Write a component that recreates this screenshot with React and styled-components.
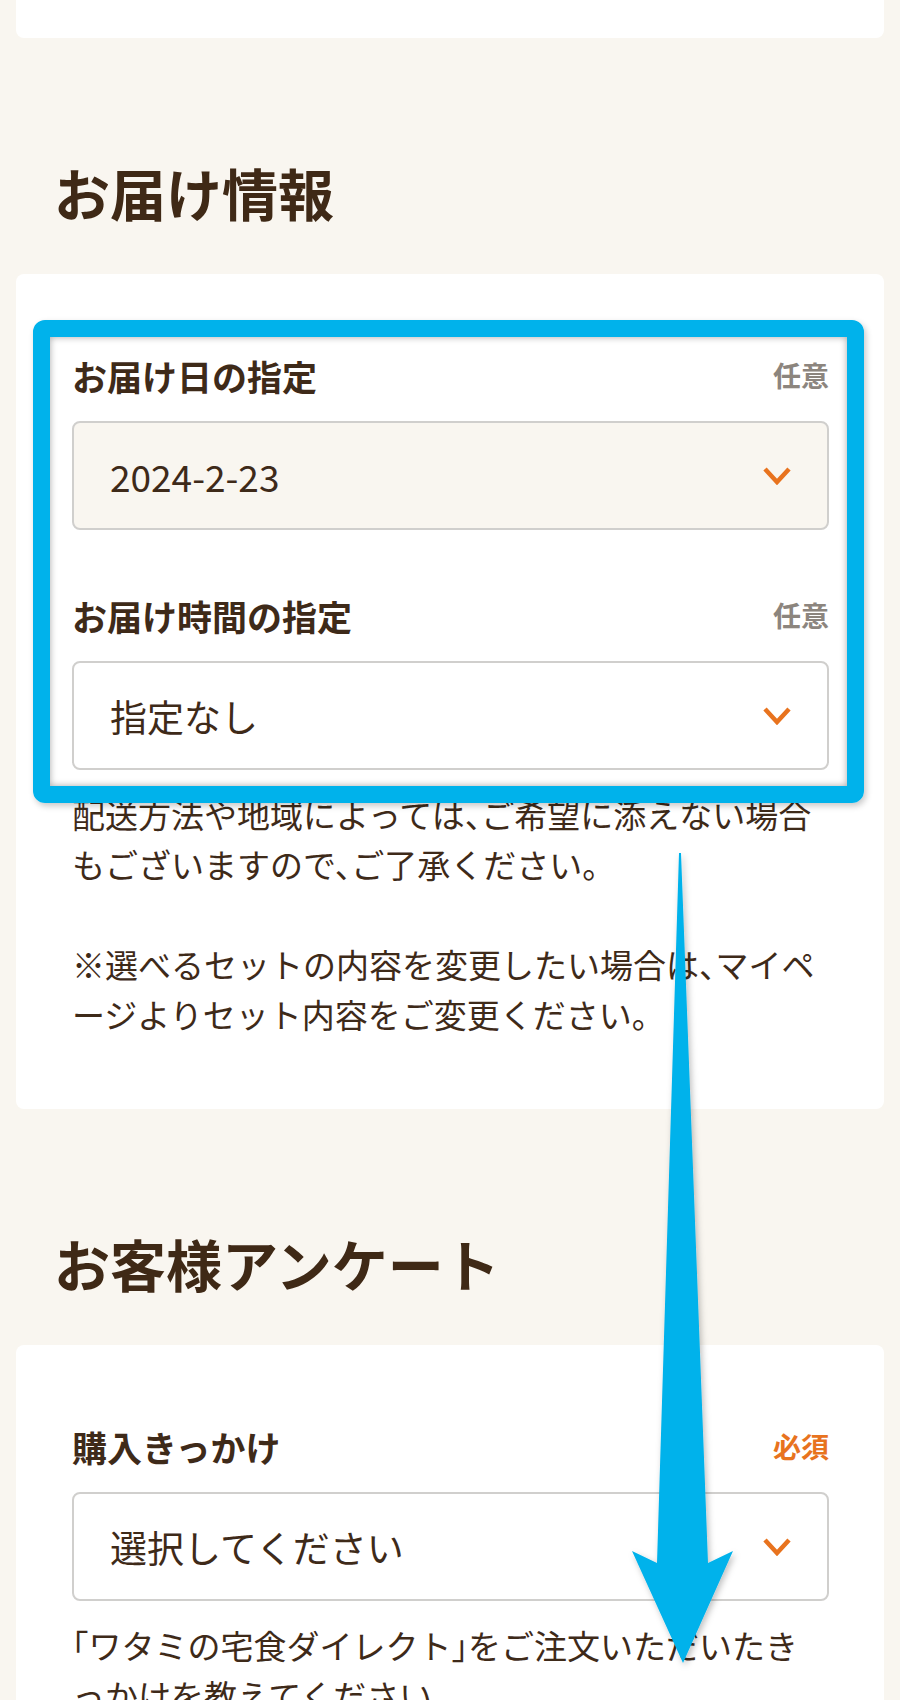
import React from 'react'
import styled, { createGlobalStyle } from 'styled-components'

const GlobalStyle = createGlobalStyle`
  html, body {
    margin: 0;
    padding: 0;
    background: #f9f6f0;
  }
  body {
    font-family: "Noto Sans CJK JP", "Noto Sans", sans-serif;
    color: #3e2a19;
  }
`;

const Page = styled.main`
  position: relative;
  padding: 0 16px 200px;
  min-height: 1700px;
  box-sizing: border-box;
`;

const Card = styled.section`
  background: #fff;
  border-radius: ${({ $clipped }) => ($clipped ? '0 0 8px 8px' : '8px')};
  padding: ${({ $clipped }) => ($clipped ? '0' : '76px 55px 70px 56px')};
  height: ${({ $clipped }) => ($clipped ? '38px' : 'auto')};
`;

const SectionTitle = styled.h2`
  margin: 113px 0 42px;
  padding-left: 38px;
  font-size: 56px;
  line-height: 81px;
  font-weight: 700;
  color: #3f2916;
`;

const FieldGroup = styled.div`
  position: relative;
`;

const Field = styled.div`
  & + & {
    margin-top: 60px;
  }
`;

const LabelRow = styled.div`
  display: flex;
  align-items: center;
  justify-content: space-between;
  height: 50px;
  margin-bottom: 21px;
`;

const Label = styled.span`
  font-size: 35px;
  font-weight: 700;
  color: #3e2a19;
`;

const Badge = styled.span`
  font-size: 28px;
  font-weight: 700;
  color: ${({ $required }) => ($required ? '#e8731e' : '#8c857e')};
`;

const Select = styled.div`
  display: flex;
  align-items: center;
  justify-content: space-between;
  height: 109px;
  box-sizing: border-box;
  padding: 0 36px 0 36px;
  border: 2px solid #d0cfcd;
  border-radius: 8px;
  background: ${({ $filled }) => ($filled ? '#f9f6f0' : '#fff')};
  font-size: 37px;
  color: #3e2a19;
`;

const Note = styled.p`
  margin: 19px 0 0;
  font-size: 33px;
  line-height: 50px;
  line-break: loose;
  font-feature-settings: "halt";
  color: #3e2a19;

  & + & {
    margin-top: 50px;
  }
`;

const Highlight = styled.div`
  position: absolute;
  top: -30px;
  bottom: -33px;
  left: -39px;
  right: -35px;
  border: 17px solid #00b2eb;
  border-radius: 12px;
  box-shadow: 2px 3px 6px rgba(0, 0, 0, 0.22), inset 0 0 7px rgba(0, 0, 0, 0.35);
  pointer-events: none;
`;

const ArrowLayer = styled.svg`
  position: absolute;
  top: 0;
  left: 0;
  pointer-events: none;
`;

const Chevron = () => (
  <svg width="28" height="18" viewBox="0 0 28 18">
    <path d="M2 2 L14 15 L26 2" fill="none" stroke="#e8731e" strokeWidth="4.5" />
  </svg>
)

const SelectField = ({ label, badge, required, value, filled }) => (
  <Field>
    <LabelRow>
      <Label>{label}</Label>
      <Badge $required={required}>{badge}</Badge>
    </LabelRow>
    <Select $filled={filled}>
      <span>{value}</span>
      <Chevron />
    </Select>
  </Field>
)

export default function App() {
  return (
    <>
      <GlobalStyle />
      <Page>
        <Card $clipped />

        <SectionTitle>お届け情報</SectionTitle>
        <Card>
          <FieldGroup>
            <SelectField label="お届け日の指定" badge="任意" value="2024-2-23" filled />
            <SelectField label="お届け時間の指定" badge="任意" value="指定なし" />
            <Highlight />
          </FieldGroup>
          <Note>配送方法や地域によっては、ご希望に添えない場合もございますので、ご了承ください。</Note>
          <Note>※選べるセットの内容を変更したい場合は、マイページよりセット内容をご変更ください。</Note>
        </Card>

        <SectionTitle>お客様アンケート</SectionTitle>
        <Card>
          <SelectField label="購入きっかけ" badge="必須" required value="選択してください" />
          <Note>「ワタミの宅食ダイレクト」をご注文いただいたきっかけを教えてください。</Note>
        </Card>

        <ArrowLayer width="900" height="1700" viewBox="0 0 900 1700">
          <defs>
            <filter id="arrowShadow" x="-50%" y="-10%" width="200%" height="120%">
              <feDropShadow dx="2" dy="3" stdDeviation="3" floodColor="#000" floodOpacity="0.25" />
            </filter>
          </defs>
          <polygon
            points="679,853 681,853 708,1563 733,1551 683,1663 632,1551 657,1563"
            fill="#00b2eb"
            filter="url(#arrowShadow)"
          />
        </ArrowLayer>
      </Page>
    </>
  )
}
